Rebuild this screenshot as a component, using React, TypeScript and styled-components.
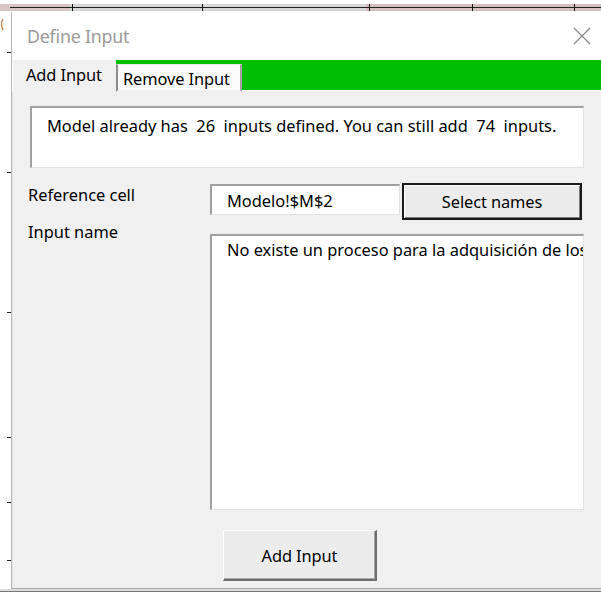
import React from "react";
import styled, { createGlobalStyle } from "styled-components";

const GlobalStyle = createGlobalStyle`
  html, body { margin: 0; padding: 0; background: #ffffff; }
  * { box-sizing: border-box; }
`;

const FONT = `"Noto Sans", "Open Sans", "Liberation Sans", sans-serif`;
const TEXT = "16.4px";

const Page = styled.div`
  width: 601px;
  height: 592px;
  overflow: hidden;
  display: flex;
  flex-direction: column;
  background: #ffffff;
  font-family: ${FONT};
`;

const SheetStrip = styled.svg`
  display: block;
  flex: none;
`;

const Middle = styled.div`
  display: flex;
  flex: 1;
  min-height: 0;
`;

const Gutter = styled.svg`
  display: block;
  flex: none;
`;

const Dialog = styled.div`
  flex: 1;
  display: flex;
  flex-direction: column;
  border-left: 1px solid #b4b4b4;
  border-bottom: 1px solid #a8a8a8;
  box-shadow: inset 1px 0 0 #e6e6e6;
  background: #f0f0f0;
`;

const TitleBar = styled.div`
  height: 48px;
  flex: none;
  background: #ffffff;
  display: flex;
  align-items: center;
  justify-content: space-between;
  padding: 0 10px 0 15px;
`;

const Title = styled.span`
  font-size: 17.8px;
  color: #9a9a9a;
  letter-spacing: -0.2px;
`;

const CloseIcon = styled.svg`
  display: block;
`;

const TabRow = styled.div`
  height: 32px;
  flex: none;
  display: flex;
  align-items: flex-end;
  background: linear-gradient(#00be00 0, #00be00 30px, #ffffff 30px, #ffffff 31px, #f0f0f0 31px);
`;

const Tab = styled.div<{ $active?: boolean }>`
  font-size: ${TEXT};
  color: #000;
  display: flex;
  align-items: center;
  letter-spacing: -0.1px;
  white-space: nowrap;
  ${(p) =>
    p.$active
      ? `
    height: 32px;
    width: 104px;
    padding-left: 13px;
    padding-bottom: 4px;
    background: #f0f0f0;
    border-left: 1px solid #ffffff;
  `
      : `
    height: 28px;
    width: 126px;
    padding-left: 5px;
    padding-top: 1px;
    background: #fbfbfb;
    border-left: 2px solid #8c8c8c;
    border-top: 1px solid #e8e8e8;
    border-right: 2px solid #a0a0a0;
    border-bottom: 2px solid #f0f0f0;
  `}
`;

const Body = styled.div`
  flex: 1;
  display: flex;
  flex-direction: column;
  padding: 14px 17px 0 18px;
`;

const Sunken = styled.div`
  background: #ffffff;
  border-top: 2px solid #a0a0a0;
  border-left: 2px solid #a0a0a0;
  border-right: 1px solid #e3e3e3;
  border-bottom: 1px solid #e3e3e3;
  font-size: ${TEXT};
  color: #000;
  white-space: pre;
  overflow: hidden;
  letter-spacing: 0;
`;

const Message = styled(Sunken)`
  height: 62px;
  padding: 6px 0 0 15px;
`;

const FormGrid = styled.div`
  display: grid;
  grid-template-columns: 180px 1fr;
  margin-top: 15px;
`;

const Label = styled.div`
  font-size: ${TEXT};
  color: #000;
  margin-left: -2px;
  letter-spacing: 0;
`;

const RefRow = styled.div`
  display: flex;
  align-items: flex-start;
  gap: 2px;
`;

const RefField = styled(Sunken)`
  width: 190px;
  height: 31px;
  margin-top: 1px;
  padding: 3px 0 0 15px;
`;

const Button = styled.div<{ $default?: boolean; $w: number; $h: number }>`
  width: ${(p) => p.$w}px;
  height: ${(p) => p.$h}px;
  display: flex;
  align-items: center;
  justify-content: center;
  font-size: ${TEXT};
  color: #000;
  letter-spacing: -0.1px;
  background: #ececec;
  ${(p) =>
    p.$default
      ? `
    border: 2px solid #1a1a1a;
    box-shadow: inset 1px 1px 0 #ffffff, inset -1px -1px 0 #7a7a7a;
  `
      : `
    border-top: 1px solid #ffffff;
    border-left: 1px solid #ffffff;
    border-right: 2px solid #6e6e6e;
    border-bottom: 2px solid #6e6e6e;
    box-shadow: inset -1px -1px 0 #a8a8a8;
  `}
`;

const NameArea = styled(Sunken)`
  height: 276px;
  margin-top: 14px;
  padding: 2px 0 0 15px;
  grid-column: 2;
`;

const Footer = styled.div`
  display: flex;
  padding: 20px 0 0 193px;
`;

const headerTicks = [72, 202, 369, 472, 574];
const gutterTicks = [40, 160, 300, 425, 490, 548];

export default function App() {
  return (
    <Page>
      <GlobalStyle />
      <SheetStrip width={601} height={12}>
        <rect x={0} y={4} width={70} height={7} fill="#d9c4c4" />
        <rect x={70} y={4} width={296} height={7} fill="#d6d6d6" />
        <rect x={366} y={4} width={235} height={7} fill="#d4bebe" />
        <line x1={10} y1={7.5} x2={601} y2={7.5} stroke="#222" strokeWidth={1} />
        {headerTicks.map((x) => (
          <line key={x} x1={x + 0.5} y1={4} x2={x + 0.5} y2={11} stroke="#111" strokeWidth={1} />
        ))}
      </SheetStrip>
      <Middle>
        <Gutter width={11} height={577}>
          <path d="M3 7 Q0 12 3 18" stroke="#b07030" strokeWidth={1.2} fill="none" />
          {gutterTicks.map((y) => (
            <line key={y} x1={7} y1={y + 0.5} x2={11} y2={y + 0.5} stroke="#222" />
          ))}
        </Gutter>
        <Dialog>
          <TitleBar>
            <Title>Define Input</Title>
            <CloseIcon width={18} height={18} viewBox="0 0 18 18">
              <path d="M1 1 L17 17 M17 1 L1 17" stroke="#8a8a8a" strokeWidth={1.2} fill="none" />
            </CloseIcon>
          </TitleBar>
          <TabRow>
            <Tab $active>Add Input</Tab>
            <Tab>Remove Input</Tab>
          </TabRow>
          <Body>
            <Message>{"Model already has  26  inputs defined. You can still add  74  inputs."}</Message>
            <FormGrid>
              <Label>Reference cell</Label>
              <RefRow>
                <RefField>Modelo!$M$2</RefField>
                <Button $default $w={180} $h={37}>
                  Select names
                </Button>
              </RefRow>
              <Label>Input name</Label>
              <NameArea>No existe un proceso para la adquisición de los</NameArea>
            </FormGrid>
            <Footer>
              <Button $w={154} $h={51}>
                Add Input
              </Button>
            </Footer>
          </Body>
        </Dialog>
      </Middle>
      <SheetStrip width={601} height={3}>
        <rect x={0} y={0} width={601} height={3} fill="#dcdcdc" />
        <line x1={0} y1={2.5} x2={601} y2={2.5} stroke="#777" />
      </SheetStrip>
    </Page>
  );
}
